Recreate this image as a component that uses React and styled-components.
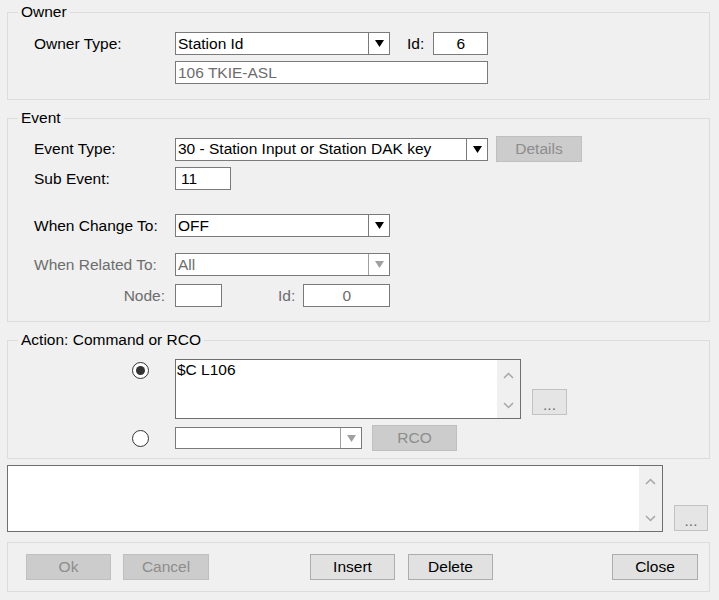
import React from "react";
import styled, { createGlobalStyle } from "styled-components";

const GlobalStyle = createGlobalStyle`
  * { box-sizing: border-box; }
  html, body {
    margin: 0;
    padding: 0;
    background: #f0f0f0;
  }
  body {
    font-family: "Liberation Sans", Arial, sans-serif;
    font-size: 15.5px;
    color: #000;
  }
`;

const Dialog = styled.div`
  width: 719px;
  height: 600px;
  padding: 3px 9px 0 7px;
  display: flex;
  flex-direction: column;
`;

const Group = styled.fieldset`
  margin: ${(p) => p.$top || 0}px 0 0;
  padding: 0;
  min-width: 0;
  border: 1px solid #dcdcdc;
`;

const Legend = styled.legend`
  margin-left: 10px;
  padding: 0 3px;
  height: 18px;
  line-height: 18px;
`;

const GroupBody = styled.div`
  padding: ${(p) => p.$pad};
`;

const Row = styled.div`
  display: flex;
  align-items: ${(p) => p.$align || "center"};
  height: ${(p) => (p.$h ? `${p.$h}px` : "auto")};
  margin-top: ${(p) => p.$gap || 0}px;
`;

const Label = styled.span`
  flex: none;
  width: 141px;
  padding-right: ${(p) => (p.$right ? 10 : 0)}px;
  text-align: ${(p) => (p.$right ? "right" : "left")};
  color: ${(p) => (p.$dim ? "#6d6d6d" : "#000")};
  white-space: nowrap;
`;

const Caption = styled.span`
  flex: none;
  margin: 0 ${(p) => p.$mr || 0}px 0 ${(p) => p.$ml || 0}px;
  color: ${(p) => (p.$dim ? "#6d6d6d" : "#000")};
`;

const Field = styled.input`
  flex: none;
  width: ${(p) => p.$w}px;
  height: 23px;
  margin: 0 0 0 ${(p) => p.$ml || 0}px;
  padding: 0 ${(p) => p.$pad ?? 2}px;
  border: 1px solid #7a7a7a;
  border-radius: 0;
  background: #fff;
  font: inherit;
  color: ${(p) => (p.$dim ? "#6d6d6d" : "#000")};
  text-align: ${(p) => (p.$center ? "center" : "left")};
  outline: none;
`;

const ComboBox = styled.div`
  flex: none;
  display: flex;
  width: ${(p) => p.$w}px;
  height: ${(p) => p.$h || 23}px;
  border: 1px solid #7a7a7a;
  background: #fff;
  color: ${(p) => (p.$dim ? "#6d6d6d" : "#000")};
`;

const ComboText = styled.span`
  flex: 1;
  display: flex;
  align-items: center;
  padding-left: 2px;
  overflow: hidden;
  white-space: nowrap;
`;

const DropButton = styled.span`
  width: 21px;
  display: flex;
  align-items: center;
  justify-content: center;
  border-left: 1px solid ${(p) => (p.$dim ? "#a0a0a0" : "#7a7a7a")};
`;

const Memo = styled.div`
  flex: none;
  display: flex;
  width: ${(p) => p.$w}px;
  height: ${(p) => p.$h}px;
  border: 1px solid #6e6e6e;
  background: #fff;
`;

const MemoText = styled.div`
  flex: 1;
  padding: 1px 1px;
  line-height: 18px;
`;

const ScrollBar = styled.div`
  width: 23px;
  display: flex;
  flex-direction: column;
  align-items: center;
  justify-content: space-between;
  padding: 12px 0 9px;
  background: #f0f0f0;
`;

const Radio = styled.span`
  flex: none;
  width: 17px;
  height: 17px;
  margin: ${(p) => p.$mt || 0}px 26px 0 0;
  display: flex;
  align-items: center;
  justify-content: center;
  border: 1px solid #333;
  border-radius: 50%;
  background: #fff;

  &::after {
    content: "";
    width: 9px;
    height: 9px;
    border-radius: 50%;
    background: ${(p) => (p.$checked ? "#333" : "transparent")};
  }
`;

const Button = styled.button`
  flex: none;
  width: ${(p) => p.$w || 86}px;
  height: 26px;
  margin: 0 0 ${(p) => p.$mb || 0}px ${(p) => p.$ml || 0}px;
  padding: 0;
  border: 1px solid #adadad;
  border-radius: 0;
  background: #e1e1e1;
  font: inherit;
  color: #000;

  &:disabled {
    background: #cccccc;
    border-color: #bfbfbf;
    color: #8d8d8d;
  }
`;

const MoreButton = styled(Button)`
  background: #e5e5e5;
  border-color: #c2c2c2;
  color: #6d6d6d;
  line-height: 30px;
`;

const Footer = styled.div`
  display: flex;
  align-items: center;
  margin-top: 10px;
  padding: 11px 11px 11px 18px;
  border: 1px solid #dcdcdc;
`;

const CloseButton = styled(Button)`
  margin-left: auto;
`;

function Arrow({ dim }) {
  return (
    <svg width="9" height="7" viewBox="0 0 9 7">
      <path d="M0 0H9L4.5 7Z" fill={dim ? "#a0a0a0" : "#000"} />
    </svg>
  );
}

function Chevron({ up }) {
  return (
    <svg width="11" height="7" viewBox="0 0 11 7">
      <polyline
        points={up ? "1,6 5.5,1.5 10,6" : "1,1 5.5,5.5 10,1"}
        fill="none"
        stroke="#a6a6a6"
        strokeWidth="1.5"
      />
    </svg>
  );
}

function Combo({ w, h, dim, value }) {
  return (
    <ComboBox $w={w} $h={h} $dim={dim}>
      <ComboText>{value}</ComboText>
      <DropButton $dim={dim}>
        <Arrow dim={dim} />
      </DropButton>
    </ComboBox>
  );
}

function TextArea({ w, h, children }) {
  return (
    <Memo $w={w} $h={h}>
      <MemoText>{children}</MemoText>
      <ScrollBar>
        <Chevron up />
        <Chevron />
      </ScrollBar>
    </Memo>
  );
}

export default function App() {
  return (
    <>
      <GlobalStyle />
      <Dialog>
        <Group>
          <Legend>Owner</Legend>
          <GroupBody $pad="11px 0 15px 26px">
            <Row>
              <Label>Owner Type:</Label>
              <Combo w={215} value="Station Id" />
              <Caption $ml={17} $mr={9}>Id:</Caption>
              <Field $w={55} $center readOnly value="6" />
            </Row>
            <Row $gap={6}>
              <Field $w={313} $ml={141} $dim readOnly value="106 TKIE-ASL" />
            </Row>
          </GroupBody>
        </Group>

        <Group $top={9}>
          <Legend>Event</Legend>
          <GroupBody $pad="9px 0 14px 26px">
            <Row $h={26}>
              <Label>Event Type:</Label>
              <Combo w={313} value="30 - Station Input or Station DAK key" />
              <Button $w={86} $ml={8} disabled>Details</Button>
            </Row>
            <Row $gap={5}>
              <Label>Sub Event:</Label>
              <Field $w={56} $pad={5} readOnly value="11" />
            </Row>
            <Row $gap={24}>
              <Label>When Change To:</Label>
              <Combo w={215} value="OFF" />
            </Row>
            <Row $gap={16}>
              <Label $dim>When Related To:</Label>
              <Combo w={215} dim value="All" />
            </Row>
            <Row $gap={8}>
              <Label $dim $right>Node:</Label>
              <Field $w={47} readOnly value="" />
              <Caption $dim $ml={56} $mr={8}>Id:</Caption>
              <Field $w={87} $center $dim readOnly value="0" />
            </Row>
          </GroupBody>
        </Group>

        <Group $top={9}>
          <Legend>Action: Command or RCO</Legend>
          <GroupBody $pad="10px 0 7px 124px">
            <Row $align="flex-start">
              <Radio $checked $mt={3} />
              <TextArea w={346} h={60}>$C L106</TextArea>
              <MoreButton $w={35} $ml={11} $mb={4} style={{ alignSelf: "flex-end" }}>...</MoreButton>
            </Row>
            <Row $gap={6} $h={26}>
              <Radio />
              <Combo w={187} h={22} dim value="" />
              <Button $w={85} $ml={10} disabled>RCO</Button>
            </Row>
          </GroupBody>
        </Group>

        <Row $gap={6} $align="flex-end">
          <TextArea w={656} h={67} />
          <MoreButton $w={34} $ml={11} $mb={1}>...</MoreButton>
        </Row>

        <Footer>
          <Button $w={85} disabled>Ok</Button>
          <Button $w={86} $ml={12} disabled>Cancel</Button>
          <Button $w={85} $ml={101}>Insert</Button>
          <Button $w={85} $ml={13}>Delete</Button>
          <CloseButton $w={86}>Close</CloseButton>
        </Footer>
      </Dialog>
    </>
  );
}
